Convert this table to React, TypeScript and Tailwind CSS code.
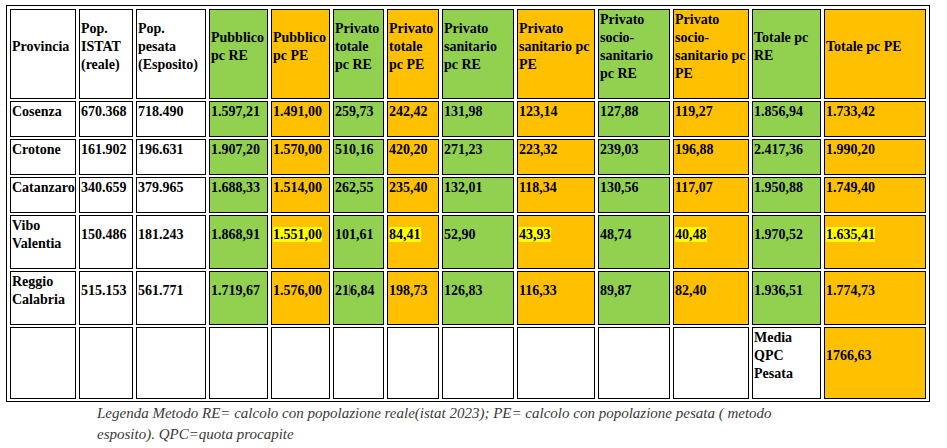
const G = 'bg-[#92D050]';
const O = 'bg-[#FFC000]';
const W = 'bg-white';

// colour per column: first three white, then green / orange alternating
const colBg = [W, W, W, G, O, G, O, G, O, G, O, G, O];
const colW = [
  'w-[66px]', 'w-[54px]', 'w-[70px]', 'w-[59px]', 'w-[59px]', 'w-[51px]', 'w-[52px]',
  'w-[72px]', 'w-[78px]', 'w-[72px]', 'w-[76px]', 'w-[69px]', 'w-[102px]',
];

const headers = [
  'Provincia',
  'Pop. ISTAT (reale)',
  'Pop. pesata (Esposito)',
  'Pubblico pc RE',
  'Pubblico pc PE',
  'Privato totale pc RE',
  'Privato totale pc PE',
  'Privato sanitario pc RE',
  'Privato sanitario pc PE',
  'Privato socio-sanitario pc RE',
  'Privato socio-sanitario pc PE',
  'Totale pc RE',
  'Totale pc PE',
];

// values marked with * are highlighted in yellow
const rows: string[][] = [
  ['Cosenza', '670.368', '718.490', '1.597,21', '1.491,00', '259,73', '242,42', '131,98', '123,14', '127,88', '119,27', '1.856,94', '1.733,42'],
  ['Crotone', '161.902', '196.631', '1.907,20', '1.570,00', '510,16', '420,20', '271,23', '223,32', '239,03', '196,88', '2.417,36', '1.990,20'],
  ['Catanzaro', '340.659', '379.965', '1.688,33', '1.514,00', '262,55', '235,40', '132,01', '118,34', '130,56', '117,07', '1.950,88', '1.749,40'],
  ['Vibo Valentia', '150.486', '181.243', '1.868,91', '*1.551,00', '101,61', '*84,41', '52,90', '*43,93', '48,74', '*40,48', '1.970,52', '*1.635,41'],
  ['Reggio Calabria', '515.153', '561.771', '1.719,67', '1.576,00', '216,84', '198,73', '126,83', '116,33', '89,87', '82,40', '1.936,51', '1.774,73'],
];

const cell = 'border border-black align-middle text-left pl-[1px] pr-[1px] pt-[1px] pb-[15px] leading-[18px]';

function Value({ v }: { v: string }) {
  if (v.startsWith('*')) return <span className="bg-[#FFFF00]">{v.slice(1)}</span>;
  if (v === '216,84') {
    // stray text cursor left in the source document
    return (
      <span>
        21<span className="inline-block w-px h-[12px] bg-gray-500 align-[-1px]" />6,84
      </span>
    );
  }
  return <>{v}</>;
}

export default function App() {
  return (
    <div className="bg-white w-[947px] h-[448px] pt-[5px] pl-[6px]" style={{ fontFamily: '"Liberation Serif", serif' }}>
      <table className="table-fixed w-[923px] border border-black border-separate border-spacing-x-[3px] border-spacing-y-[2px] pt-[1px] text-[14px] font-bold text-black">
        <thead>
          <tr>
            {headers.map((h, i) => (
              <th key={h} className={`${cell} ${colW[i]} ${colBg[i]} font-bold`}>
                {h}
              </th>
            ))}
          </tr>
        </thead>
        <tbody>
          {rows.map(r => (
            <tr key={r[0]}>
              {r.map((v, i) => (
                <td key={i} className={`${cell} ${colBg[i]} ${i === 0 ? '' : 'whitespace-nowrap'}`}>
                  <Value v={v} />
                </td>
              ))}
            </tr>
          ))}
          <tr>
            {colBg.map((_, i) => {
              if (i === 11) return <td key={i} className={`${cell} ${W}`}>Media QPC Pesata</td>;
              if (i === 12) return <td key={i} className={`${cell} ${O}`}>1766,63</td>;
              return <td key={i} className={`${cell} ${W}`} />;
            })}
          </tr>
        </tbody>
      </table>
      <p className="ml-[91px] w-[700px] pt-[1px] text-[15px] italic leading-[21px] text-[#3a3a3a]">
        Legenda Metodo RE= calcolo con popolazione reale(istat 2023); PE= calcolo con popolazione pesata ( metodo esposito). QPC=quota procapite
      </p>
    </div>
  );
}
